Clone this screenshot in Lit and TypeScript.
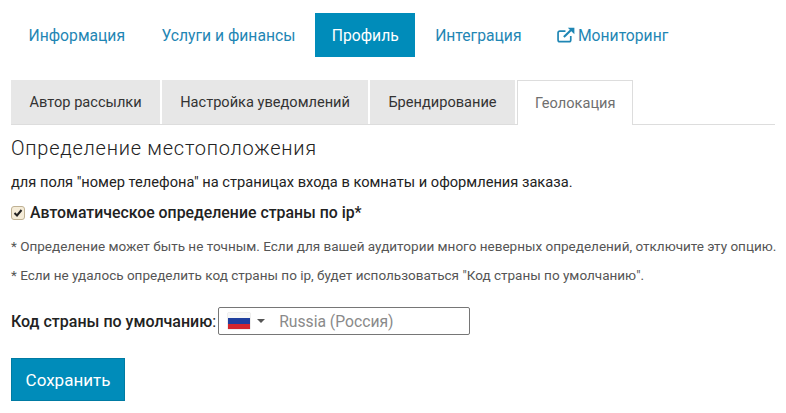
import { LitElement, css, html } from "lit";
import { customElement } from "lit/decorators.js";

const NAV = ["Информация", "Услуги и финансы", "Профиль", "Интеграция"];
const TABS = ["Автор рассылки", "Настройка уведомлений", "Брендирование", "Геолокация"];

@customElement("app-root")
export class AppRoot extends LitElement {
  static styles = css`
    :host {
      display: block;
      font-family: Roboto, "Liberation Sans", sans-serif;
      color: #222;
      padding: 13px 11px 12px;
    }

    .nav {
      display: flex;
      gap: 3px;
      height: 44px;
    }

    .nav a {
      display: flex;
      align-items: center;
      gap: 3px;
      padding: 0 16.7px;
      font-size: 15.7px;
      color: #1f86b4;
    }

    .nav a:first-child {
      padding-left: 17.5px;
    }

    .nav a.active {
      background: #008cba;
      color: #fff;
    }

    .nav svg {
      width: 18px;
      height: 16px;
      margin-left: -1px;
    }

    .tabs {
      display: flex;
      gap: 2px;
      margin-top: 23px;
      height: 45px;
      border-bottom: 1px solid #ddd;
      box-sizing: border-box;
    }

    .tab {
      display: flex;
      align-items: center;
      padding: 0 18px 0 18.5px;
      height: 44px;
      font-size: 14.6px;
      color: #333;
      background: #e7e7e7;
    }

    .tab.active {
      height: 45px;
      margin-left: 0.5px;
      padding: 0 17px;
      color: #6f6f6f;
      background: #fff;
      border: 1px solid #ddd;
      border-bottom: none;
      box-sizing: border-box;
    }

    h2 {
      margin: 11px 0 0;
      font-size: 20px;
      font-weight: 300;
      line-height: 24px;
      letter-spacing: 0.75px;
      color: #222;
    }

    .lead {
      margin: 13px 0 0;
      font-size: 14.65px;
      line-height: 18px;
    }

    .auto {
      display: flex;
      align-items: center;
      gap: 5px;
      margin-top: 12px;
      font-size: 15.85px;
      font-weight: 500;
      line-height: 20px;
    }

    .box {
      display: flex;
      align-items: center;
      justify-content: center;
      width: 14px;
      height: 14px;
      box-sizing: border-box;
      border: 1px solid #bfb193;
      border-radius: 3px;
      background: #f5ecd8;
    }

    .box svg {
      width: 10px;
      height: 10px;
    }

    .note {
      margin: 13px 0 0;
      font-size: 13.52px;
      line-height: 16px;
      color: #555;
      white-space: nowrap;
    }

    .auto + .note {
      margin-top: 15px;
    }

    .row {
      display: flex;
      align-items: center;
      margin-top: 24px;
      font-size: 16px;
    }

    .row b {
      font-weight: 500;
    }

    .phone {
      display: flex;
      align-items: center;
      width: 252px;
      height: 28px;
      margin-left: 2px;
      box-sizing: border-box;
      border: 1px solid #767676;
      border-radius: 2px;
      font-size: 15.7px;
      color: #8a8a8a;
    }

    .flag {
      width: 22px;
      height: 16px;
      margin-left: 9px;
      flex: none;
      display: flex;
      flex-direction: column;
      box-shadow: 0 0 1px #999;
    }

    .flag i {
      flex: 1;
    }

    .caret {
      width: 0;
      height: 0;
      margin: 0 0 0 7px;
      border: 4px solid transparent;
      border-top-color: #555;
      border-bottom: none;
    }

    .phone span {
      margin-left: 14px;
    }

    button {
      display: block;
      margin-top: 23px;
      width: 114px;
      height: 43px;
      padding: 0;
      border: 1px solid #007ba3;
      background: #008cba;
      color: #fff;
      font: 400 17px Roboto, "Liberation Sans", sans-serif;
    }
  `;

  render() {
    return html`
      <nav class="nav">
        ${NAV.map((n) => html`<a class=${n === "Профиль" ? "active" : ""}>${n}</a>`)}
        <a>
          <svg viewBox="0 0 17 15" fill="none" stroke="currentColor" stroke-width="1.6">
            <path d="M13 8.5V12.2a1.6 1.6 0 0 1-1.6 1.6H2.6A1.6 1.6 0 0 1 1 12.2V5.4a1.6 1.6 0 0 1 1.6-1.6H8" />
            <path d="M6.5 9.5 14 2" stroke-width="2" />
            <path d="M10.2 0.6H16.4V6.8Z" fill="currentColor" stroke="none" />
          </svg>
          Мониторинг
        </a>
      </nav>

      <div class="tabs">
        ${TABS.map(
          (t) => html`<div class="tab ${t === "Геолокация" ? "active" : ""}">${t}</div>`,
        )}
      </div>

      <h2>Определение местоположения</h2>
      <p class="lead">для поля "номер телефона" на страницах входа в комнаты и оформления заказа.</p>

      <label class="auto">
        <span class="box">
          <svg viewBox="0 0 10 10" fill="none" stroke="#222" stroke-width="2">
            <path d="M1.5 5 4 7.5 8.5 2" />
          </svg>
        </span>
        Автоматическое определение страны по ip*
      </label>
      <p class="note">
        * Определение может быть не точным. Если для вашей аудитории много неверных определений,
        отключите эту опцию.
      </p>
      <p class="note">
        * Если не удалось определить код страны по ip, будет использоваться "Код страны по
        умолчанию".
      </p>

      <div class="row">
        <b>Код страны по умолчанию</b><span>:</span>
        <div class="phone">
          <div class="flag">
            <i style="background:#f7f7f7"></i>
            <i style="background:#1f3f9e"></i>
            <i style="background:#d3262e"></i>
          </div>
          <div class="caret"></div>
          <span>Russia (Россия)</span>
        </div>
      </div>

      <button>Сохранить</button>
    `;
  }
}
